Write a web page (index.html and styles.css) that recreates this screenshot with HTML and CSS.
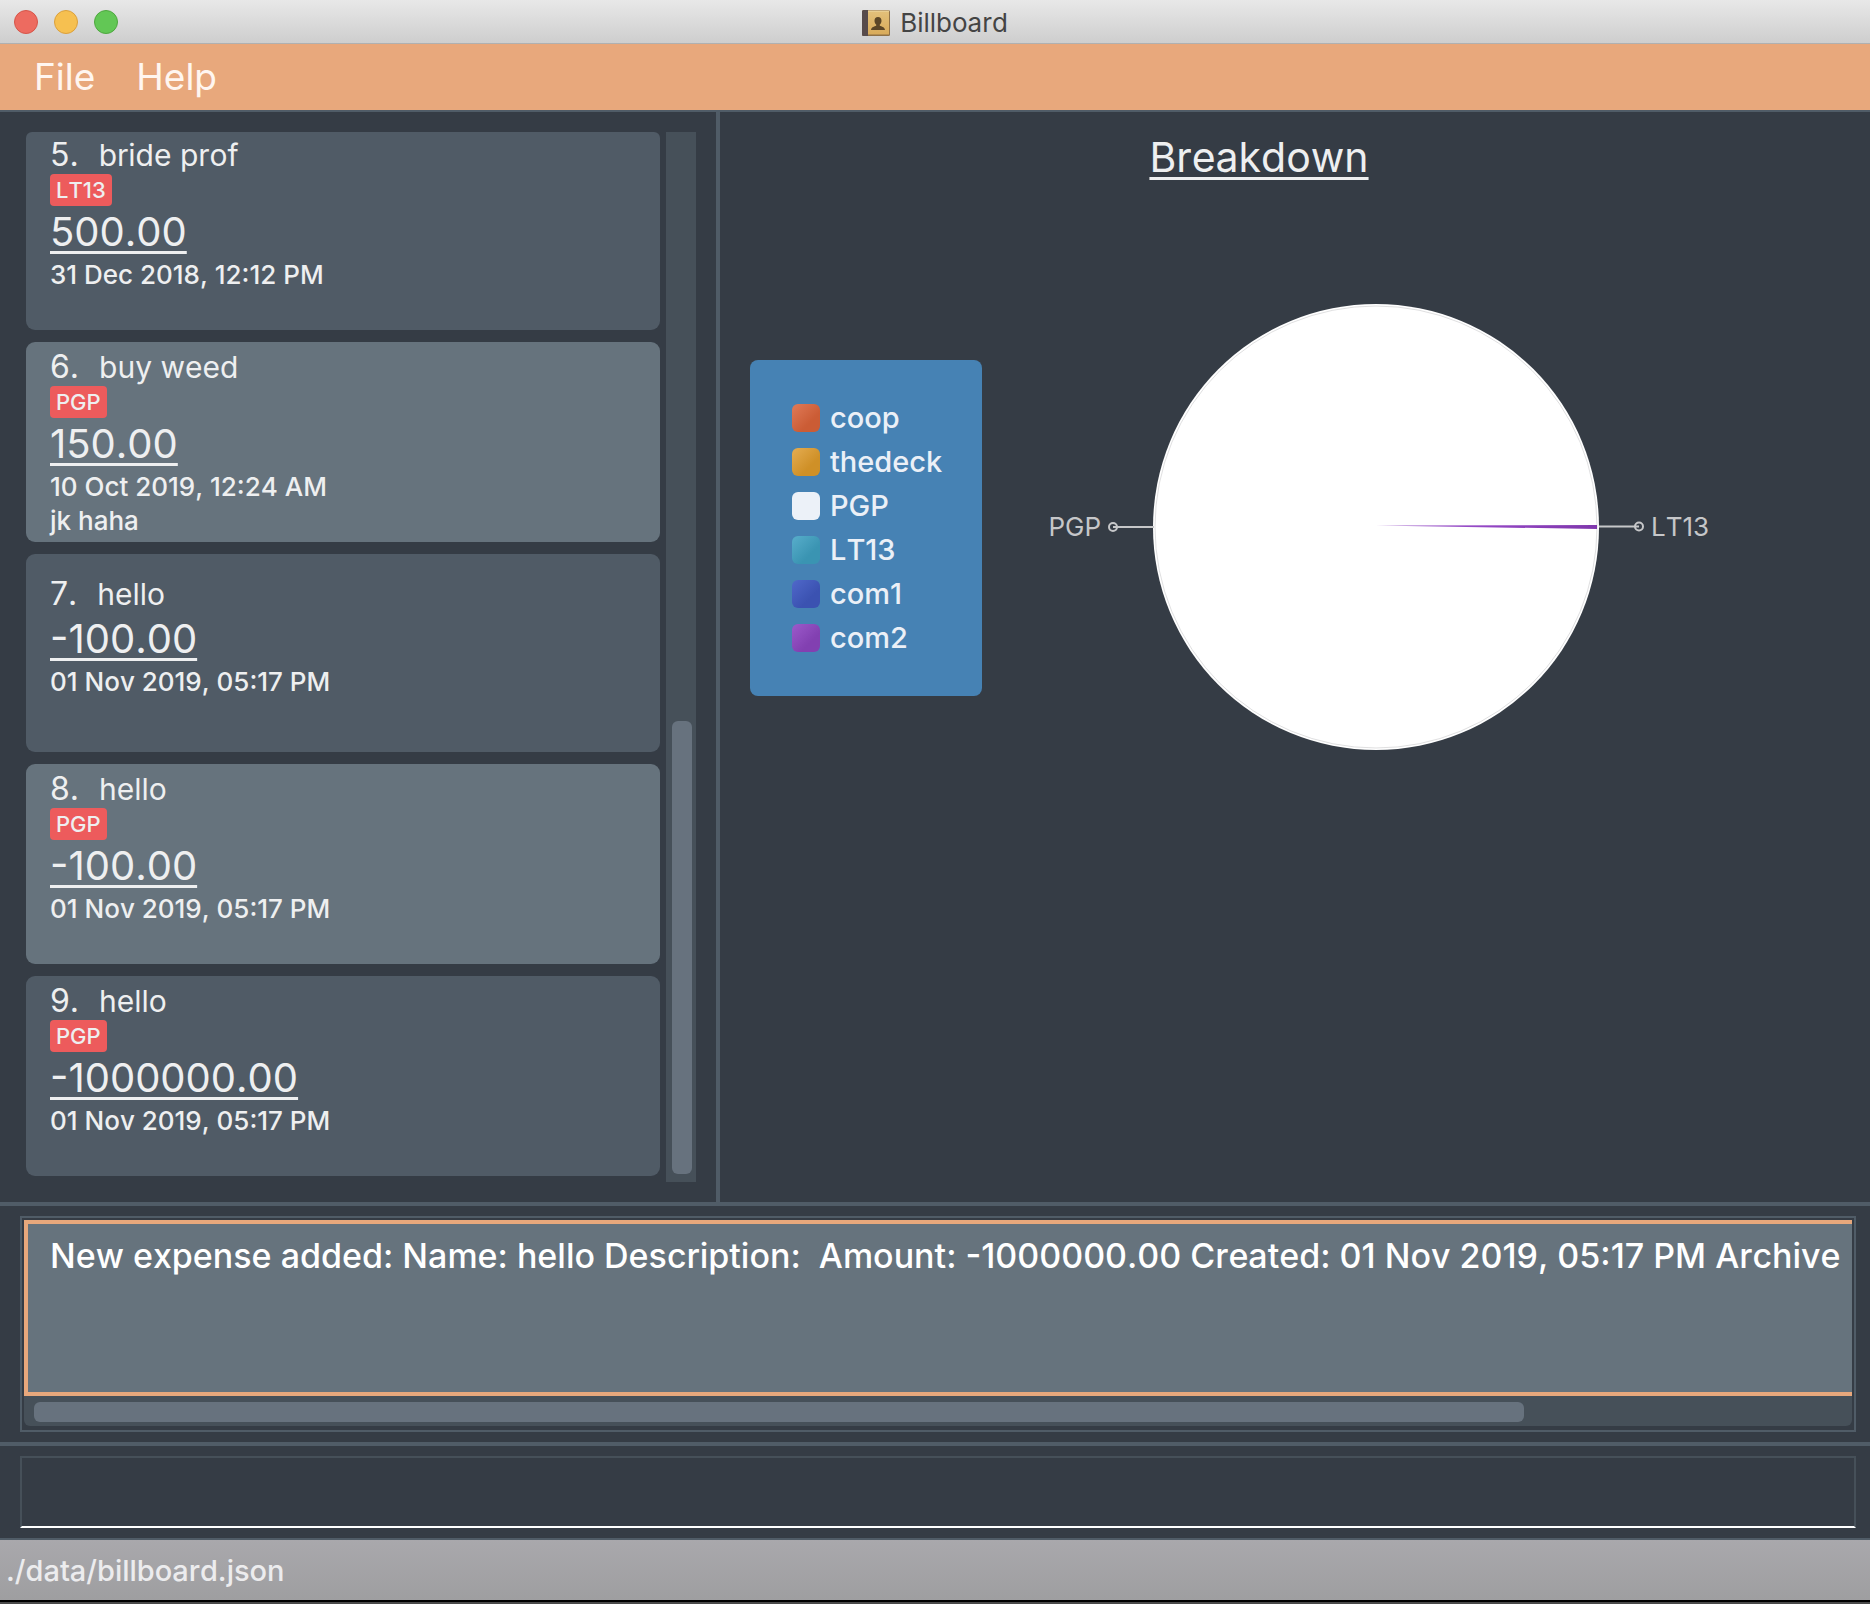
FILE: index.html
```html
<!DOCTYPE html>
<html lang="en">
<head>
<meta charset="utf-8">
<title>Billboard</title>
<link rel="stylesheet" href="styles.css">
</head>
<body>
<header class="titlebar">
  <div class="lights">
    <button class="light light--close" type="button" aria-label="Close"></button>
    <button class="light light--minimise" type="button" aria-label="Minimise"></button>
    <button class="light light--zoom" type="button" aria-label="Zoom"></button>
  </div>
  <h1 class="window-title">
    <svg class="app-icon" viewBox="0 0 28 28" aria-hidden="true">
      <defs>
        <linearGradient id="cover" x1="0" y1="0" x2="0" y2="1"><stop offset="0" stop-color="#e3c07a"/><stop offset="1" stop-color="#d9ab5a"/></linearGradient>
      </defs>
      <rect x="0" y="1" width="28" height="26" rx="1.5" fill="#8f7146"/>
      <path d="M1.5 1H6v26H1.500A1.500 1.500 0 0 1 0 25.500V2.500A1.500 1.500 0 0 1 1.500 1z" fill="#574b4b"/>
      <rect x="6" y="2" width="21" height="23.500" fill="url(#cover)"/>
      <path d="M6 2h21" stroke="#f0dba8"/>
      <path d="M16 8c2.300 0 3.500 1.500 3.500 3.700 0 1.700-.8 3-1.700 3.900v1.200c1.800.8 5 1.300 5.200 4.200H9c.2-2.900 3.400-3.400 5.200-4.200v-1.200c-.9-.9-1.700-2.200-1.700-3.900C12.500 9.500 13.700 8 16 8z" fill="#5c4627"/>
    </svg>
    Billboard
  </h1>
</header>

<nav class="menubar" aria-label="Main menu">
  <button class="menu" type="button">File</button>
  <button class="menu" type="button">Help</button>
</nav>

<main class="split">
  <section class="expenses" aria-label="Expenses">
    <ol class="cards">
      <li class="card card--cut">
        <div class="name"><span class="index">5.</span><span>bride prof</span></div>
        <span class="tag">LT13</span>
        <div class="amount">500.00</div>
        <div class="line">31 Dec 2018, 12:12 PM</div>
        <div class="line"></div>
      </li>
      <li class="card card--alt">
        <div class="name"><span class="index">6.</span><span>buy weed</span></div>
        <span class="tag">PGP</span>
        <div class="amount">150.00</div>
        <div class="line">10 Oct 2019, 12:24 AM</div>
        <div class="line">jk haha</div>
      </li>
      <li class="card">
        <div class="name"><span class="index">7.</span><span>hello</span></div>
        <div class="amount">-100.00</div>
        <div class="line">01 Nov 2019, 05:17 PM</div>
        <div class="line"></div>
      </li>
      <li class="card card--alt">
        <div class="name"><span class="index">8.</span><span>hello</span></div>
        <span class="tag">PGP</span>
        <div class="amount">-100.00</div>
        <div class="line">01 Nov 2019, 05:17 PM</div>
        <div class="line"></div>
      </li>
      <li class="card">
        <div class="name"><span class="index">9.</span><span>hello</span></div>
        <span class="tag">PGP</span>
        <div class="amount">-1000000.00</div>
        <div class="line">01 Nov 2019, 05:17 PM</div>
        <div class="line"></div>
      </li>
    </ol>
    <div class="vtrack"><div class="vthumb"></div></div>
  </section>

  <section class="breakdown">
    <h2 class="heading">Breakdown</h2>
    <div class="chart">
      <ul class="legend">
        <li class="entry"><span class="swatch swatch--coop"></span>coop</li>
        <li class="entry"><span class="swatch swatch--thedeck"></span>thedeck</li>
        <li class="entry"><span class="swatch swatch--pgp"></span>PGP</li>
        <li class="entry"><span class="swatch swatch--lt13"></span>LT13</li>
        <li class="entry"><span class="swatch swatch--com1"></span>com1</li>
        <li class="entry"><span class="swatch swatch--com2"></span>com2</li>
      </ul>
      <svg class="pie" viewBox="0 1 786 450" role="img" aria-label="Spending by tag">
        <defs>
          <linearGradient id="sliver" x1="0" x2="1"><stop offset="0" stop-color="#a86fd0"/><stop offset=".5" stop-color="#9346c4"/><stop offset="1" stop-color="#7f37ac"/></linearGradient>
        </defs>
        <circle cx="394" cy="225" r="223" fill="#fff"/>
        <circle cx="394" cy="225" r="221" fill="none" stroke="#c9c9cb" stroke-width=".6"/>
        <path d="M394 223.500L615 223v4z" fill="url(#sliver)"/>
        <g fill="none" stroke="#c6c7c9" stroke-width="2">
          <path d="M131 225h41M617 224.500h40"/>
          <circle cx="131" cy="225" r="4"/>
          <circle cx="657" cy="224.500" r="4"/>
        </g>
        <text class="pie-label" x="119" y="234" text-anchor="end">PGP</text>
        <text class="pie-label" x="669" y="234">LT13</text>
      </svg>
    </div>
  </section>
</main>

<section class="result">
  <div class="result-frame">
    <textarea class="result-text" wrap="off" readonly aria-label="Result">New expense added: Name: hello Description:  Amount: -1000000.00 Created: 01 Nov 2019, 05:17 PM Archive</textarea>
    <div class="htrack"><div class="hthumb"></div></div>
  </div>
</section>

<section class="command">
  <input class="command-input" type="text" aria-label="Command">
</section>

<footer class="status">./data/billboard.json</footer>
</body>
</html>
```
FILE: styles.css
```css
* {
  box-sizing: border-box;
}

body {
  display: flex;
  flex-direction: column;
  min-height: 100vh;
  margin: 0;
  background: #353c45;
  color: #eeeff0;
  font-family: Inter, "Liberation Sans", sans-serif;
  font-kerning: none;
}

button,
input,
textarea {
  margin: 0;
  border: 0;
  border-radius: 0;
  font-family: inherit;
  font-kerning: inherit;
}

h1,
h2,
ol,
ul {
  margin: 0;
  padding: 0;
  font-weight: 400;
  list-style: none;
}

/* Title bar */
.titlebar {
  display: grid;
  grid-template-columns: 1fr auto 1fr;
  align-items: center;
  height: 44px;
  padding: 0 14px;
  border-bottom: 1px solid #b0b0b0;
  background: linear-gradient(#e8e8e8, #cecece);
}

.lights {
  display: flex;
  gap: 16px;
}

.light {
  width: 24px;
  height: 24px;
  padding: 0;
  border: 1px solid;
  border-radius: 50%;
}

.light--close {
  border-color: #d65549;
  background: #ed6b60;
}

.light--minimise {
  border-color: #dba03c;
  background: #f6c050;
}

.light--zoom {
  border-color: #4ea73f;
  background: #62c755;
}

.window-title {
  display: flex;
  align-items: center;
  gap: 10px;
  padding-top: 2px;
  color: #444;
  font-size: 26px;
  line-height: 32px;
}

.app-icon {
  width: 28px;
  height: 28px;
}

/* Menu bar */
.menubar {
  display: flex;
  gap: 41px;
  height: 68px;
  padding: 0 34px;
  border-bottom: 2px solid #505c67;
  background: #e8a87c;
}

.menu {
  padding: 0;
  background: none;
  color: #fff6f0;
  font-size: 37px;
  line-height: 66px;
}

/* Split pane */
.split {
  display: grid;
  flex: 1;
  grid-template-columns: 72fr 115fr;
  border-bottom: 4px solid #505c67;
}

.expenses {
  display: flex;
  gap: 6px;
  padding: 20px 20px 20px 26px;
  border-right: 4px solid #505c67;
}

.cards {
  display: flex;
  flex: 1;
  flex-direction: column;
  gap: 12px;
}

.card {
  display: flex;
  flex-direction: column;
  align-items: flex-start;
  justify-content: center;
  min-height: 198px;
  padding: 8px 24px 4px;
  border-radius: 9px;
  background: #505b66;
}

.card--alt {
  background: #66737d;
}

.card--cut {
  padding-top: 6px;
  border-radius: 6px 6px 9px 9px;
}

.name {
  display: flex;
  align-items: baseline;
  gap: 20px;
  height: 36px;
  font-size: 30px;
  line-height: 34px;
}

.index {
  font-size: 32px;
}

.tag {
  padding: 0 6px;
  border-radius: 4px;
  background: #ed5b5c;
  font-size: 22px;
  font-weight: 500;
  line-height: 32px;
}

.amount {
  font-size: 40px;
  line-height: 52px;
  text-decoration: underline 3px;
  text-underline-offset: 5px;
}

.line {
  height: 34px;
  font-size: 26px;
  font-weight: 500;
  line-height: 34px;
}

.vtrack {
  display: flex;
  flex-direction: column;
  justify-content: flex-end;
  width: 30px;
  padding: 6px 4px 8px 6px;
  background: #465059;
}

.vthumb {
  height: 43.7%;
  border-radius: 6px;
  background: #67727e;
}

/* Breakdown chart */
.breakdown {
  padding: 20px 72px 20px 0;
}

.heading {
  font-size: 41px;
  line-height: 50px;
  text-align: center;
  text-decoration: underline 3px;
  text-underline-offset: 5px;
}

.chart {
  display: flex;
  align-items: center;
  margin-top: 121px;
  padding: 0 30px;
}

.legend {
  width: 232px;
  padding: 36px 42px;
  border-radius: 8px;
  background: #4682b4;
}

.entry {
  display: flex;
  align-items: center;
  gap: 10px;
  color: #ebf0f7;
  font-size: 29px;
  font-weight: 500;
  line-height: 44px;
}

.swatch {
  flex: none;
  width: 28px;
  height: 28px;
  border-radius: 6px;
}

.swatch--coop {
  background: linear-gradient(135deg, #e07a58, #cb5c35 65%);
}

.swatch--thedeck {
  background: linear-gradient(135deg, #e5ad52, #cf9027 65%);
}

.swatch--pgp {
  background: #ecf1f8;
}

.swatch--lt13 {
  background: linear-gradient(135deg, #58aecb, #3a94b2 65%);
}

.swatch--com1 {
  background: linear-gradient(135deg, #5068ca, #3b52b1 65%);
}

.swatch--com2 {
  background: linear-gradient(135deg, #9c5acb, #8240b1 65%);
}

.pie {
  flex: 1;
  min-width: 0;
}

.pie-label {
  fill: #c6c7c9;
  font-size: 26px;
}

/* Result display */
.result {
  padding: 10px 14px 10px 20px;
  border-bottom: 4px solid #505c67;
}

.result-frame {
  padding: 2px 2px 4px;
  border: 2px solid #505c67;
}

.result-text {
  display: block;
  width: 100%;
  height: 176px;
  padding: 12px 0 12px 22px;
  border: solid #e8a87c;
  border-width: 4px 0 4px 4px;
  outline: 0;
  background: #66737d;
  color: #fff;
  font-size: 34px;
  font-weight: 500;
  line-height: 40px;
  resize: none;
  overflow: hidden;
}

.htrack {
  height: 30px;
  padding: 6px 10px 4px;
  border-radius: 0 0 6px 6px;
  background: #465059;
}

.hthumb {
  width: 82.4%;
  height: 20px;
  border-radius: 6px;
  background: #67727e;
}

/* Command box */
.command {
  padding: 10px 14px 10px 20px;
  border-bottom: 2px solid #505c67;
}

.command-input {
  display: block;
  width: 100%;
  height: 72px;
  padding: 0 20px;
  border: 2px solid #465059;
  border-bottom-color: #fff;
  background: none;
  color: #fff;
  font-size: 34px;
}

/* Status bar */
.status {
  height: 64px;
  padding: 0 6px;
  border-bottom: 2px solid #4a4a4a;
  background: linear-gradient(#a9a8ac, #9e9ea0);
  box-shadow: inset 0 -2px #000;
  color: #ececee;
  font-size: 29px;
  font-weight: 500;
  line-height: 62px;
}
```
